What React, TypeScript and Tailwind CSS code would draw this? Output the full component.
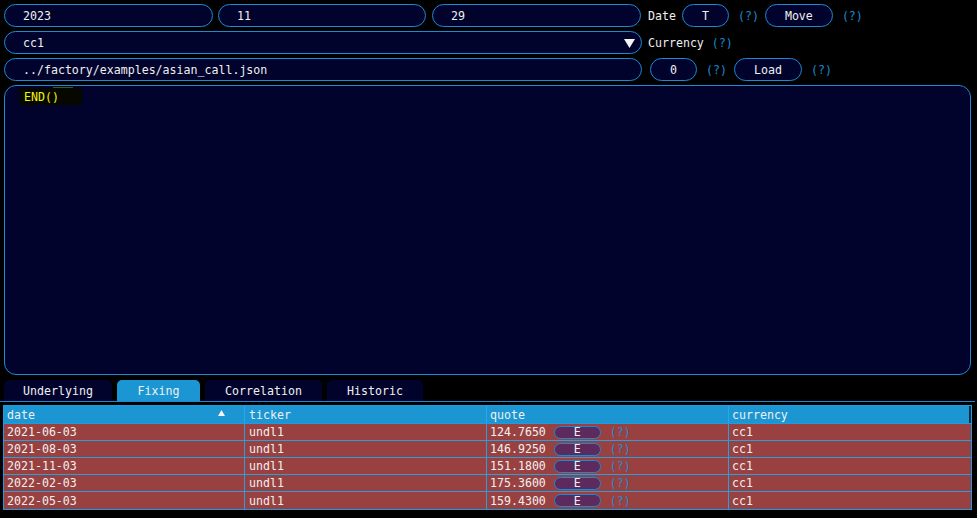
import React from "react";

const font = { fontFamily: '"DejaVu Sans Mono", "Liberation Mono", monospace' };

const fixings = [
  { date: "2021-06-03", ticker: "undl1", quote: "124.7650", currency: "cc1" },
  { date: "2021-08-03", ticker: "undl1", quote: "146.9250", currency: "cc1" },
  { date: "2021-11-03", ticker: "undl1", quote: "151.1800", currency: "cc1" },
  { date: "2022-02-03", ticker: "undl1", quote: "175.3600", currency: "cc1" },
  { date: "2022-05-03", ticker: "undl1", quote: "159.4300", currency: "cc1" },
];

function Field({ value, className }: { value: string; className: string }) {
  return (
    <div
      className={`h-[23px] flex items-center pl-[18px] pt-[2px] rounded-full border border-[#1b8ad3] bg-[#01032d] text-[#f0f0f0] ${className}`}
    >
      {value}
    </div>
  );
}

function Btn({ label, className }: { label: string; className: string }) {
  return (
    <div
      className={`h-[23px] flex items-center justify-center pt-[2px] rounded-full border border-[#1b8ad3] bg-[#01032d] text-[#f0f0f0] ${className}`}
    >
      {label}
    </div>
  );
}

function Help({ className = "" }: { className?: string }) {
  return <span className={`text-[#1b8ad3] translate-y-[1px] ${className}`}>(?)</span>;
}

export default function App() {
  return (
    <div
      className="w-[977px] h-[518px] bg-black text-[11.6px] leading-none overflow-hidden flex flex-col pt-[4px]"
      style={font}
    >
      {/* Date row */}
      <div className="flex items-center pl-[4px]">
        <Field value="2023" className="w-[209px]" />
        <Field value="11" className="w-[208px] ml-[5px]" />
        <Field value="29" className="w-[209px] ml-[6px]" />
        <span className="ml-[7px] text-[#f0f0f0] translate-y-[1px]">Date</span>
        <Btn label="T" className="w-[47px] ml-[6px]" />
        <Help className="ml-[9px]" />
        <Btn label="Move" className="w-[68px] ml-[6px]" />
        <Help className="ml-[9px]" />
      </div>

      {/* Currency row */}
      <div className="flex items-center pl-[4px] mt-[4px]">
        <div className="w-[638px] h-[23px] flex items-center justify-between pl-[18px] pr-[6px] rounded-full border border-[#1b8ad3] bg-[#01032d] text-[#f0f0f0]">
          <span className="translate-y-[1px]">cc1</span>
          <svg width="11" height="10" viewBox="0 0 11 10">
            <polygon points="0,1 11,1 5.5,10" fill="#f4f4f4" />
          </svg>
        </div>
        <span className="ml-[6px] text-[#f0f0f0] translate-y-[1px]">Currency</span>
        <Help className="ml-[8px]" />
      </div>

      {/* File row */}
      <div className="flex items-center pl-[4px] mt-[4px]">
        <Field value="../factory/examples/asian_call.json" className="w-[638px]" />
        <Btn label="0" className="w-[47px] ml-[8px]" />
        <Help className="ml-[9px]" />
        <Btn label="Load" className="w-[68px] ml-[7px]" />
        <Help className="ml-[9px]" />
      </div>

      {/* Script editor */}
      <div className="ml-[4px] mt-[4px] w-[967px] h-[290px] rounded-[12px] border border-[#1b8ad3] bg-[#01032d] pl-[14px] pt-[2px]">
        <div className="relative w-[63px] h-[17px] bg-[#060800] flex items-center pl-[5px] pt-[2px] text-[#f5f500]">
          <div className="absolute top-[-1px] left-[34px] w-[20px] h-[1px] bg-[#1d6a1d]" />
          END()
        </div>
      </div>

      {/* Tabs */}
      <div className="mt-[5px] flex items-end gap-[5px] pl-[4px] h-[22px] border-b border-[#1b8ad3] w-[975px]">
        <div className="w-[108px] h-[21px] pt-[2px] rounded-t-[5px] bg-[#01032d] text-[#f0f0f0] flex items-center justify-center">
          Underlying
        </div>
        <div className="w-[83px] h-[21px] pt-[2px] rounded-t-[5px] bg-[#1b96d3] text-[#f0f0f0] flex items-center justify-center">
          Fixing
        </div>
        <div className="w-[117px] h-[21px] pt-[2px] rounded-t-[5px] bg-[#01032d] text-[#f0f0f0] flex items-center justify-center">
          Correlation
        </div>
        <div className="w-[96px] h-[21px] pt-[2px] rounded-t-[5px] bg-[#01032d] text-[#f0f0f0] flex items-center justify-center">
          Historic
        </div>
      </div>

      {/* Fixing table */}
      <div className="ml-[3px] mt-[3px] w-[969px] border border-[#1f9be0] text-[#f0f0f0]">
        <div className="grid grid-cols-[241px_242px_242px_1fr] h-[18px] bg-[#1b96d3] border-b border-[#1f9be0]">
          <div className="flex items-center justify-between pl-[3px] pr-[19px] pt-[2px] border-r border-[#2aa6ee]">
            <span>date</span>
            <svg width="7" height="6" viewBox="0 0 7 6" className="-translate-y-[3px]">
              <polygon points="3.5,0 7,6 0,6" fill="#f4f4f4" />
            </svg>
          </div>
          <div className="flex items-center pl-[4px] pt-[2px] border-r border-[#2aa6ee]">ticker</div>
          <div className="flex items-center pl-[3px] pt-[2px] border-r border-[#2aa6ee]">quote</div>
          <div className="flex items-center pl-[3px] pt-[2px] border-r-2 border-[#0a2a40]">currency</div>
        </div>
        {fixings.map((f, i) => (
          <div
            key={i}
            className={`grid grid-cols-[241px_242px_242px_1fr] h-[17px] bg-[#994141] ${
              i < fixings.length - 1 ? "border-b border-[#2a9ee0]" : ""
            }`}
          >
            <div className="flex items-center pl-[3px] pt-[2px] border-r border-[#2a9ee0]">{f.date}</div>
            <div className="flex items-center pl-[4px] pt-[2px] border-r border-[#2a9ee0]">{f.ticker}</div>
            <div className="flex items-center pl-[3px] border-r border-[#2a9ee0]">
              <span className="translate-y-[1px]">{f.quote}</span>
              <span className="ml-[8px] w-[47px] h-[13px] pt-[2px] rounded-full border border-[#1b8ad3] bg-[#5c2a5c] flex items-center justify-center">
                E
              </span>
              <Help className="ml-[9px]" />
            </div>
            <div className="flex items-center pl-[3px] pt-[2px]">{f.currency}</div>
          </div>
        ))}
      </div>
    </div>
  );
}
